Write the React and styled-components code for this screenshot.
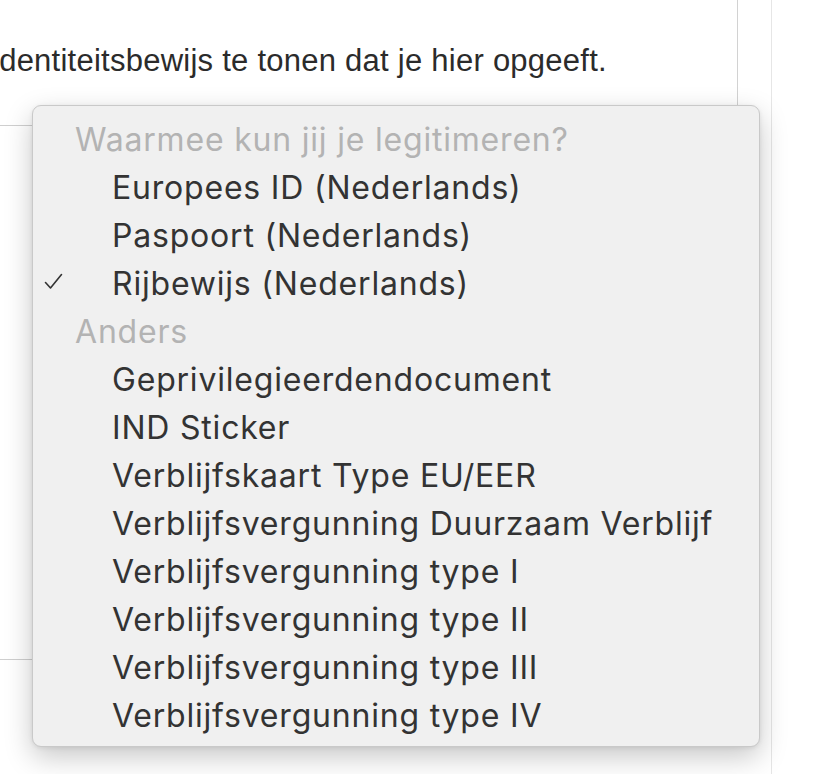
import React from 'react';
import styled, {createGlobalStyle} from 'styled-components';

const GlobalStyle = createGlobalStyle`
  html, body {
    margin: 0;
    padding: 0;
    background: #ffffff;
    overflow: hidden;
  }
`;

const Page = styled.div`
  display: flex;
  width: 826px;
  height: 774px;
  background: #ffffff;
`;

const Main = styled.div`
  position: relative;
  width: 737px;
  height: 740px;
  border-right: 1px solid #d2d2d2;
`;

const Gutter = styled.div`
  width: 33px;
`;

const Sidebar = styled.div`
  flex: 1;
  border-left: 1px solid #e6e6e6;
`;

const Intro = styled.p`
  margin: 0 0 0 -8px;
  padding-top: 41px;
  font-family: 'Liberation Sans', Arial, sans-serif;
  font-size: 31px;
  line-height: 40px;
  letter-spacing: 0.25px;
  color: #2b2b2b;
  white-space: nowrap;
`;

const Field = styled.div`
  margin-top: 44px;
  width: 700px;
  height: 533px;
  border-top: 1px solid #cfcfcf;
  border-bottom: 1px solid #cfcfcf;
`;

const Menu = styled.ul`
  position: absolute;
  left: 32px;
  top: 105px;
  width: 728px;
  margin: 0;
  padding: 9px 0 7px;
  list-style: none;
  box-sizing: border-box;
  background: #f0f0f0;
  border: 1px solid #c9c9c9;
  border-radius: 9px;
  box-shadow: 0 10px 28px rgba(0, 0, 0, 0.22), 0 1px 4px rgba(0, 0, 0, 0.08);
  font-family: Inter, 'Noto Sans', sans-serif;
`;

const Row = styled.li`
  position: relative;
  height: 48px;
  display: flex;
  align-items: center;
  padding-left: ${(p) => (p.header ? '42px' : '79px')};
  font-size: 32px;
  letter-spacing: 0.8px;
  color: ${(p) => (p.header ? '#b3b3b3' : '#333333')};
  white-space: nowrap;
`;

const Check = styled.svg`
  position: absolute;
  left: 11px;
  top: 14px;
  width: 19px;
  height: 17px;
`;

const groups = [
  {
    title: 'Waarmee kun jij je legitimeren?',
    items: ['Europees ID (Nederlands)', 'Paspoort (Nederlands)', 'Rijbewijs (Nederlands)'],
  },
  {
    title: 'Anders',
    items: [
      'Geprivilegieerdendocument',
      'IND Sticker',
      'Verblijfskaart Type EU/EER',
      'Verblijfsvergunning Duurzaam Verblijf',
      'Verblijfsvergunning type I',
      'Verblijfsvergunning type II',
      'Verblijfsvergunning type III',
      'Verblijfsvergunning type IV',
    ],
  },
];

const selected = 'Rijbewijs (Nederlands)';

const App = () => (
  <>
    <GlobalStyle />
    <Page>
      <Main>
        <Intro>identiteitsbewijs te tonen dat je hier opgeeft.</Intro>
        <Field />
        <Menu>
          {groups.map((g) => (
            <React.Fragment key={g.title}>
              <Row header>{g.title}</Row>
              {g.items.map((item) => (
                <Row key={item}>
                  {item === selected && (
                    <Check viewBox="0 0 19 17">
                      <path d="M1.5 9.5 L6.5 15 L17.5 1.5" fill="none" stroke="#333" strokeWidth="1.6" strokeLinecap="round" strokeLinejoin="round" />
                    </Check>
                  )}
                  {item}
                </Row>
              ))}
            </React.Fragment>
          ))}
        </Menu>
      </Main>
      <Gutter />
      <Sidebar />
    </Page>
  </>
);

export default App;
